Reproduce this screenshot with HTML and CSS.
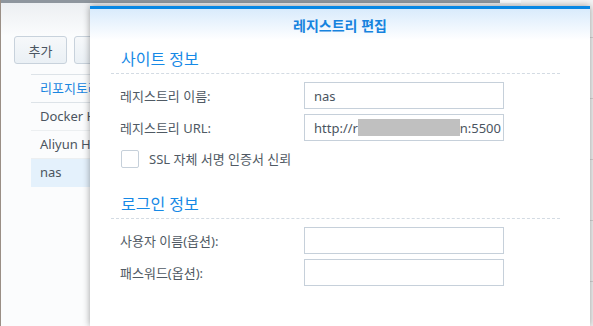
FILE: index.html
```html
<!DOCTYPE html>
<html lang="ko">
<head>
    <meta charset="UTF-8">
    <title>레지스트리 편집</title>
    <link rel="stylesheet" href="styles.css">
</head>
<body>
    <div class="desktop">
        <div class="app">
            <div class="app-bar"></div>
            <div class="toolbar">
                <button class="btn">추가</button>
                <button class="btn btn-wide">편집</button>
            </div>
            <div class="repo-list">
                <div class="repo-row repo-head">리포지토리</div>
                <div class="repo-row">Docker Hub</div>
                <div class="repo-row">Aliyun Hub</div>
                <div class="repo-row selected">nas</div>
            </div>
        </div>
        <div class="behind"></div>

        <div class="dialog">
            <div class="dialog-head">레지스트리 편집</div>
            <div class="dialog-body">
                <div class="section-title">사이트 정보</div>
                <div class="form-row">
                    <label class="form-label">레지스트리 이름:</label>
                    <div class="field">nas</div>
                </div>
                <div class="form-row">
                    <label class="form-label">레지스트리 URL:</label>
                    <div class="field field-url">
                        <span>http://r</span>
                        <span class="redacted"></span>
                        <span>n:5500</span>
                    </div>
                </div>
                <div class="check-row">
                    <span class="checkbox"></span>
                    <span>SSL 자체 서명 인증서 신뢰</span>
                </div>

                <div class="section-title section-second">로그인 정보</div>
                <div class="form-row">
                    <label class="form-label">사용자 이름(옵션):</label>
                    <div class="field"></div>
                </div>
                <div class="form-row">
                    <label class="form-label">패스워드(옵션):</label>
                    <div class="field"></div>
                </div>
            </div>
        </div>
    </div>
</body>
</html>
```

FILE: styles.css
```css
body { margin: 0; width: 593px; height: 326px; overflow: hidden; background: #f2f3f4; font-family: "Noto Sans", "Noto Sans CJK KR", sans-serif; color: #505a64; }
.desktop { position: relative; height: 326px; display: flex; border-left: 1px solid #9a8f86; }

.app { width: 520px; height: 326px; background: #fbfcfd; }
.app-bar { height: 3px; width: 499px; background: #8e969e; }
.toolbar { height: 33px; padding: 0 0 0 13px; display: flex; align-items: flex-end; gap: 7px; background: linear-gradient(#eceff2, #fbfcfd); }
.btn { width: 53px; height: 28px; margin-bottom: -28px; border: 1px solid #c8d2dc; border-radius: 3px; background: linear-gradient(#f6f8fa, #eaf0f5); font-family: "Noto Sans", "Noto Sans CJK KR", sans-serif; font-size: 13px; color: #4a5561; padding: 0; }
.btn-wide { width: 70px; }

.repo-list { margin: 38px 0 0 30px; border-top: 1px solid #dde3e8; }
.repo-row { height: 27px; line-height: 27px; padding-left: 9px; font-size: 13px; color: #4b5560; border-bottom: 1px solid #eceff1; }
.repo-head { color: #1a86e0; border-bottom-color: #dde3e8; }
.repo-row.selected { background: #e4f1fc; border-bottom-color: #e4f1fc; }

.behind { flex: 1; background: repeating-linear-gradient(#f4f4f4 0, #f4f4f4 60px, #d6d6d6 60px, #d6d6d6 61px); background-position: 0 -23px; }

.dialog { position: absolute; left: 89px; top: 6px; width: 500px; height: 317px; background: #fff; border-top: 3px solid #0787e4; box-shadow: 0 0 7px rgba(0, 0, 0, 0.38); }
.dialog-head { height: 31px; display: flex; align-items: center; justify-content: center; font-size: 14px; font-weight: bold; color: #1683de; background: linear-gradient(#d9ebfc, #fff); }
.dialog-body { padding: 0 30px 0 21px; }

.section-title { padding: 7px 0 2px 10px; line-height: 24px; font-size: 16px; color: #1689e6; border-bottom: 1px dashed #d3dbe3; }
.section-second { margin-top: 18px; }

.form-row { display: flex; align-items: center; margin-top: 8px; }
.form-row + .form-row { margin-top: 5px; }
.form-label { width: 184px; padding-left: 9px; font-size: 13px; }
.field { width: 200px; height: 27px; box-sizing: border-box; border: 1px solid #c6d0da; padding: 0 2px 0 9px; display: flex; align-items: center; font-size: 13px; color: #4a5460; }
.redacted { flex: 1; height: 17px; background: #c0c0c0; }

.check-row { display: flex; align-items: center; gap: 10px; margin: 9px 0 0 10px; font-size: 13px; height: 17px; }
.checkbox { width: 16px; height: 16px; border: 1px solid #c6d0da; border-radius: 2px; background: #fff; }
```
